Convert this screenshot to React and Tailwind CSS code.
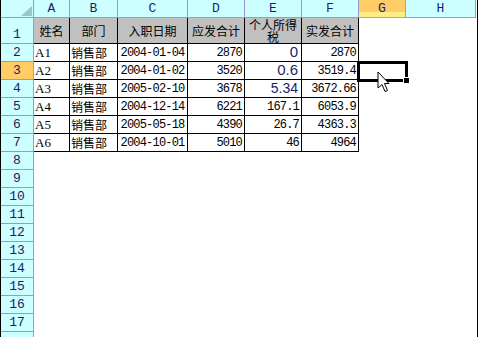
import React from "react";

const grid = "grid grid-cols-[33px_36px_48px_70px_57px_57px_57px_47px_70px_1fr]";
const mono = "font-['Liberation_Mono',monospace]";
const cjk = "font-['Noto_Sans_CJK_SC','Noto_Sans_CJK_JP',sans-serif]";

const letters = ["A", "B", "C", "D", "E", "F", "G", "H"];

const rows = [
  ["A1", "销售部", "2004-01-04", "2870", "0", "2870"],
  ["A2", "销售部", "2004-01-02", "3520", "0.6", "3519.4"],
  ["A3", "销售部", "2005-02-10", "3678", "5.34", "3672.66"],
  ["A4", "销售部", "2004-12-14", "6221", "167.1", "6053.9"],
  ["A5", "销售部", "2005-05-18", "4390", "26.7", "4363.3"],
  ["A6", "销售部", "2004-10-01", "5010", "46", "4964"],
];

function RowHead({ n, active }) {
  return (
    <div
      className={`flex items-end justify-center border-r border-b border-[#9999cc] ${
        active ? "bg-[#ffcc66]" : "bg-[#ccffff]"
      } ${mono} text-[13px] leading-[16px] text-[#1c1c6e]`}
    >
      {n}
    </div>
  );
}

function Cell({ children, gray, className = "" }) {
  return (
    <div
      className={`flex items-center border-r border-b border-black overflow-hidden whitespace-nowrap ${
        gray ? "bg-[#c0c0c0]" : "bg-white"
      } ${className}`}
    >
      {children}
    </div>
  );
}

export default function App() {
  return (
    <div className="relative w-[478px] h-[337px] overflow-hidden bg-white border-l border-r border-black">
      {/* column headers */}
      <div className={`${grid} h-[18px]`}>
        <div className="flex items-end justify-end pr-[1px] pb-[1px] border-r border-b border-[#9999cc] bg-[#ccffff]">
          <svg width="11" height="10" viewBox="0 0 11 10">
            <polygon points="11,0 11,10 0,10" fill="#9cc6c6" />
          </svg>
        </div>
        {letters.map((l) =>
          l === "G" ? (
            <div
              key={l}
              className={`flex flex-col border-r border-b border-[#d9a040] ${mono} text-[13px] text-[#1c1c6e]`}
            >
              <div className="h-[12px] bg-[#ffcc66]" />
              <div className="flex-1 bg-[#ffee88]" />
              <span className="absolute mt-[1px] ml-[19px] leading-[15px]">{l}</span>
            </div>
          ) : (
            <div
              key={l}
              className={`flex items-center justify-center border-r border-b border-[#9999cc] bg-[#ccffff] ${mono} text-[13px] leading-[15px] text-[#1c1c6e]`}
            >
              {l}
            </div>
          )
        )}
        <div className="bg-white" />
      </div>

      {/* row 1 */}
      <div className={`${grid} h-[26px]`}>
        <RowHead n={1} />
        {["姓名", "部门", "入职日期", "应发合计"].map((t) => (
          <Cell key={t} gray className={`justify-center ${cjk} text-[12px] text-black`}>
            {t}
          </Cell>
        ))}
        <div
          className={`flex items-center justify-center border-r border-b border-black bg-[#c0c0c0] ${cjk} text-[12px] leading-[12px] text-center text-black`}
        >
          <span>
            个人所得
            <br />
            税
          </span>
        </div>
        <Cell gray className={`justify-center ${cjk} text-[12px] text-black`}>
          实发合计
        </Cell>
        <div />
        <div />
        <div />
      </div>

      {/* data rows */}
      {rows.map((r, i) => (
        <div key={r[0]} className={`${grid} h-[18px]`}>
          <RowHead n={i + 2} active={i === 1} />
          <Cell className="pl-[1px] font-['Liberation_Serif',serif] text-[13px] text-black">{r[0]}</Cell>
          <Cell className={`pl-[1px] ${cjk} text-[12px] text-black`}>{r[1]}</Cell>
          <Cell className={`justify-center ${mono} text-[12px] tracking-[-0.8px] text-black`}>{r[2]}</Cell>
          <Cell className={`justify-end pr-[2px] ${mono} text-[12px] tracking-[-0.8px] text-black`}>{r[3]}</Cell>
          {i < 3 ? (
            <Cell
              className={`justify-end pr-[3px] font-['Liberation_Sans',Arial,sans-serif] ${
                i === 2 ? "text-[14px]" : "text-[15px]"
              } text-[#1c2466]`}
            >
              {r[4]}
            </Cell>
          ) : (
            <Cell className={`justify-end pr-[2px] ${mono} text-[12px] tracking-[-0.8px] text-black`}>{r[4]}</Cell>
          )}
          <Cell className={`justify-end pr-[2px] ${mono} text-[12px] tracking-[-0.8px] text-black`}>{r[5]}</Cell>
          <div />
          <div />
          <div />
        </div>
      ))}

      {/* empty rows */}
      {Array.from({ length: 11 }, (_, k) => k + 8).map((n) => (
        <div key={n} className={`${grid} h-[18px]`}>
          <RowHead n={n < 18 ? n : ""} />
          <div className="col-span-9" />
        </div>
      ))}

      {/* active cell G3 */}
      <div className="absolute left-[356px] top-[61px] w-[51px] h-[21px] border-[3px] border-black" />
      <div className="absolute left-[402px] top-[77px] w-[6px] h-[6px] bg-black border-l border-t border-white" />

      {/* mouse pointer */}
      <svg className="absolute left-[376px] top-[71px]" width="14" height="22" viewBox="0 0 14 22">
        <path
          d="M1 1 L1 17 L5 13.5 L8 20.5 L10.5 19.5 L7.5 12.5 L12 12.5 Z"
          fill="white"
          stroke="black"
          strokeWidth="1"
          strokeLinejoin="miter"
        />
      </svg>
    </div>
  );
}
